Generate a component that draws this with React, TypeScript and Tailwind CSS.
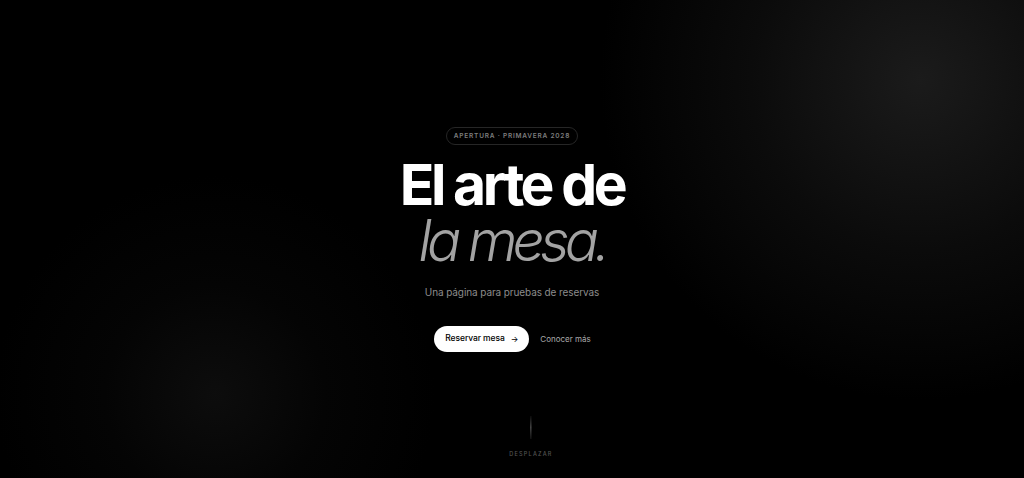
export default function App() {
  return (
    <div
      className="relative h-[478px] w-full overflow-hidden bg-black text-white"
      style={{ fontFamily: "Inter, 'Noto Sans', sans-serif" }}
    >
      <div className="pointer-events-none absolute inset-0 bg-[radial-gradient(circle_at_920px_80px,#1b1b1b_0px,#0b0b0b_170px,#000000_320px)]" />
      <div className="pointer-events-none absolute inset-0 bg-[radial-gradient(circle_at_215px_395px,rgba(16,16,16,0.8)_0px,rgba(8,8,8,0.5)_110px,rgba(0,0,0,0)_220px)]" />

      <main className="relative flex h-full flex-col items-center justify-center">
        <div className="rounded-full border border-[#262626] px-[7px] py-[4px] text-[6.5px] font-semibold uppercase leading-[8px] tracking-[0.12em] text-[#7d7d7d]">
          Apertura · Primavera 2028
        </div>

        <h1 className="mt-[12px] text-center text-[57px] leading-[56px] tracking-[-0.06em]">
          <span className="block font-bold text-white">El arte de</span>
          <span className="block font-light italic tracking-[-0.085em] text-[#a3a3a3]">la mesa.</span>
        </h1>

        <p className="mt-[16px] text-[10px] tracking-[-0.01em] text-[#8c8c8c]">
          Una página para pruebas de reservas
        </p>

        <div className="mt-[26px] ml-[1px] flex items-center gap-[11px]">
          <button
            type="button"
            className="flex h-[26px] w-[95px] items-center justify-center gap-[6px] rounded-full bg-white text-[8.5px] font-medium tracking-[-0.01em] text-black"
          >
            Reservar mesa <span className="text-[8px]">→</span>
          </button>
          <button type="button" className="text-[8px] text-[#ababab]">
            Conocer más
          </button>
        </div>
      </main>

      <div className="absolute bottom-[20px] left-[531px] flex -translate-x-1/2 flex-col items-center gap-[11px]">
        <div className="h-[23px] w-px bg-gradient-to-b from-[#111111] via-[#6a6a6a] to-[#1a1a1a]" />
        <span className="text-[5.5px] font-medium uppercase tracking-[0.22em] text-[#555555]">
          Desplazar
        </span>
      </div>
    </div>
  );
}
